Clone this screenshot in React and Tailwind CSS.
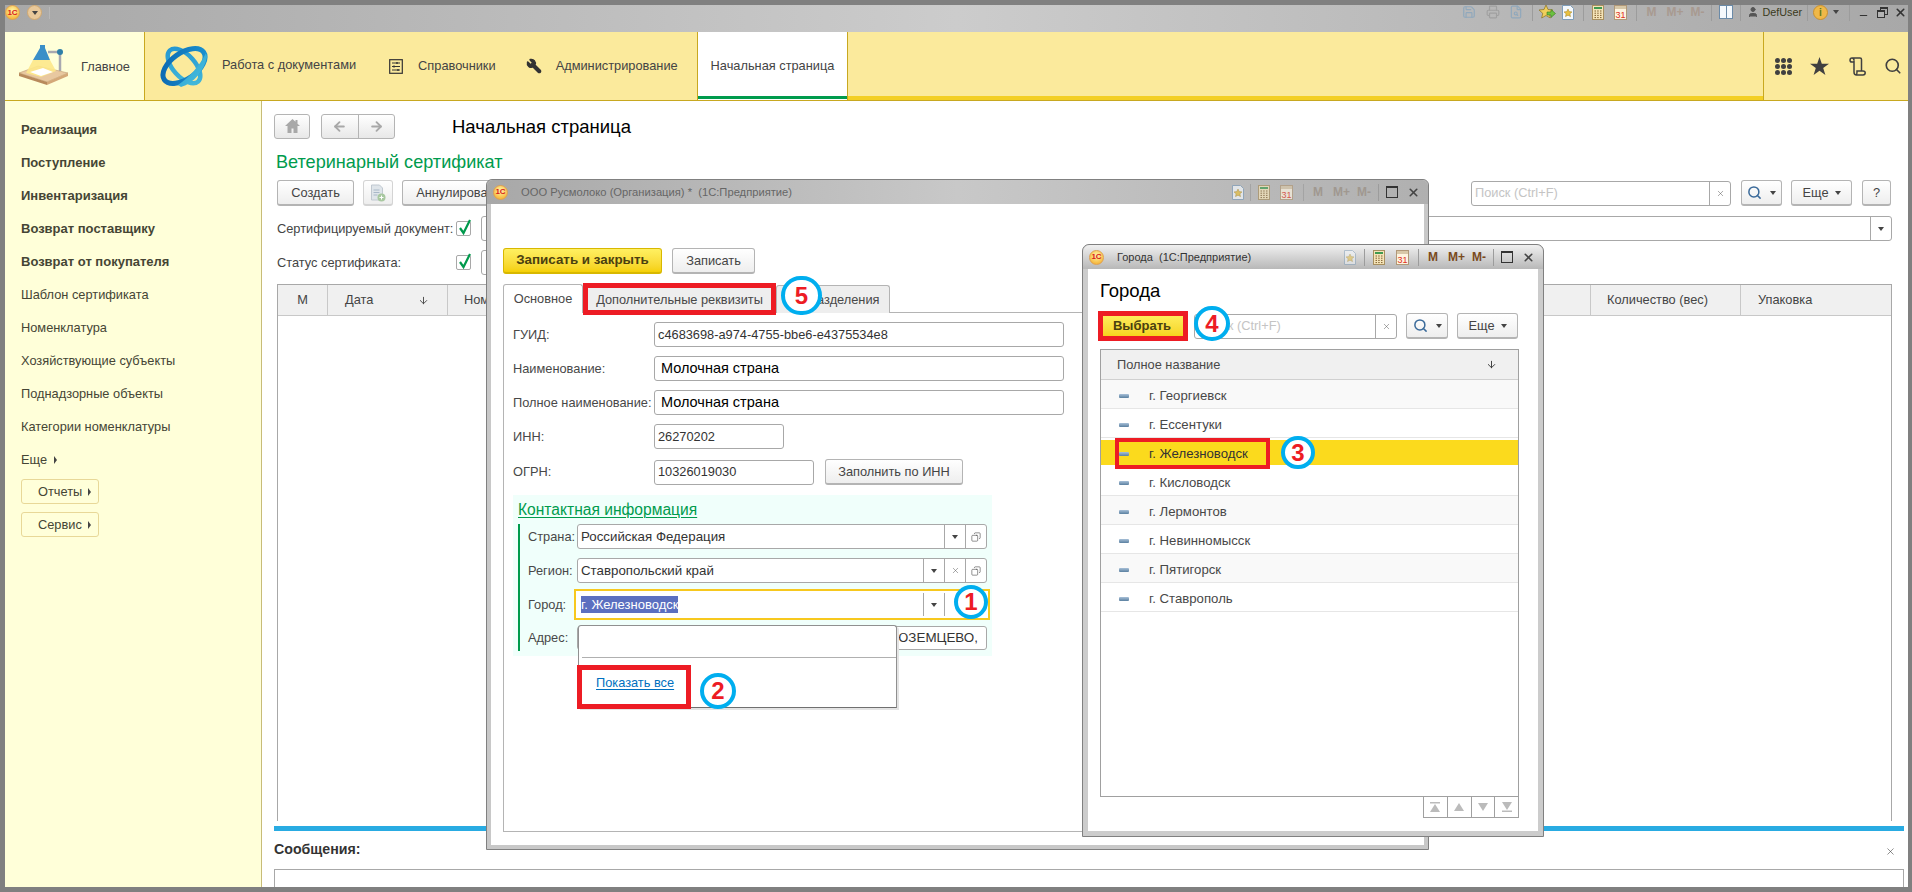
import { Search, Wrench, ArrowLeft, ArrowRight, Save, Printer, FileSearch, User, X, Minus, Copy, ArrowDown } from 'lucide-react'

const SIDE_BOLD = ['Реализация', 'Поступление', 'Инвентаризация', 'Возврат поставщику', 'Возврат от покупателя']
const SIDE_PLAIN = ['Шаблон сертификата', 'Номенклатура', 'Хозяйствующие субъекты', 'Поднадзорные объекты', 'Категории номенклатуры']
const CITIES = ['г. Георгиевск', 'г. Ессентуки', 'г. Железноводск', 'г. Кисловодск', 'г. Лермонтов', 'г. Невинномысск', 'г. Пятигорск', 'г. Ставрополь']
const PAGER = ['M1 0h10v1.500H1zM6 2l5 8H1z', 'M6 1l5 8H1z', 'M1 1h10L6 9z', 'M1 8.500h10V10H1zM6 8L1 0h10z']

function Logo1C() {
    return (
        <div className="w-[15px] h-[15px] shrink-0 rounded-full bg-[radial-gradient(circle_at_50%_35%,#fff6a8,#f4a51c)] border border-[#e0a050] flex items-center justify-center text-[8px] leading-none font-bold text-[#d8201c]">
            1С
        </div>
    )
}

function Caret({ className = '' }) {
    return <span className={`inline-block w-0 h-0 border-x-[3.5px] border-x-transparent border-t-[4px] border-t-[#444] ${className}`} />
}

function CaretRight() {
    return <span className="inline-block w-0 h-0 border-y-[4px] border-y-transparent border-l-[3.5px] border-l-[#444]" />
}

function PageStar() {
    return (
        <svg width="12" height="15" viewBox="0 0 12 15" className="shrink-0">
            <path d="M.5.5h8l3 3v11H.5z" fill="#f4f8fc" stroke="#7f9db9" />
            <path d="M6 4l1.200 2.600 2.800.3-2.100 1.900.6 2.800L6 10.200l-2.500 1.400.6-2.800L2 6.900l2.800-.3z" fill="#e8c040" stroke="#a08020" strokeWidth=".5" />
        </svg>
    )
}

function Calc() {
    return (
        <svg width="12" height="15" viewBox="0 0 12 15" className="shrink-0">
            <rect x=".5" y=".5" width="11" height="14" fill="#f5e4b8" stroke="#a89060" />
            <rect x="2" y="2" width="8" height="2" fill="#3f9a50" />
            <path d="M2.500 6h1.500M5.200 6h1.500M8 6h1.500M2.500 8.200h1.500M5.200 8.200h1.500M8 8.200h1.500M2.500 10.400h1.500M5.200 10.400h1.500M8 10.400h1.500M2.500 12.600h1.500M5.200 12.600h1.500M8 12.600h1.500" stroke="#806030" />
        </svg>
    )
}

function Cal31() {
    return (
        <svg width="13" height="15" viewBox="0 0 13 15" className="shrink-0">
            <rect x=".5" y=".5" width="12" height="14" fill="#fdf4e0" stroke="#b09878" />
            <rect x="1" y="1" width="11" height="3" fill="#d8c8a8" />
            <text x="6.500" y="12.800" textAnchor="middle" fontSize="9" fill="#e0301c" fontFamily="Liberation Sans">31</text>
        </svg>
    )
}

function FavArrow() {
    return (
        <svg width="17" height="16" viewBox="0 0 17 16" className="shrink-0">
            <path d="M7 1l2 4.500 5 .5-3.700 3.300 1 4.700L7 11.500 2.700 14l1-4.700L0 6l5-.5z" fill="#f0cf5a" stroke="#8a7020" strokeWidth=".7" />
            <path d="M8 8h4V5.500l4.500 4-4.500 4V11H8z" fill="#6cc040" stroke="#3a7a20" strokeWidth=".6" />
        </svg>
    )
}

function MemKeys({ className }) {
    return (
        <div className={`flex items-center gap-[7px] text-[12px] font-bold leading-none ${className}`}>
            <span className="w-[16px] text-center">M</span>
            <span className="w-[16px] text-center">M+</span>
            <span className="w-[16px] text-center">M-</span>
        </div>
    )
}

function Sep() {
    return <div className="w-px h-[17px] bg-[#9c9c9c] shrink-0" />
}

function Btn({ children, className = '' }) {
    return (
        <div className={`h-[26px] shrink-0 flex items-center justify-center rounded-[3px] border border-[#b4b4b4] border-b-[2px] bg-linear-to-b from-white to-[#eeeeee] text-[#444] whitespace-nowrap ${className}`}>
            {children}
        </div>
    )
}

function Field({ children, className = '', cells = null }) {
    return (
        <div className={`h-[25px] shrink-0 flex items-center rounded-[3px] border border-[#a8a8a8] bg-white ${className}`}>
            <div className="flex-1 min-w-0 px-[3px] whitespace-nowrap text-[#333]">{children}</div>
            {cells}
        </div>
    )
}

function Cell({ children, className = 'w-[21px]' }) {
    return <div className={`h-full shrink-0 flex items-center justify-center border-l border-[#a8a8a8] ${className}`}>{children}</div>
}

function OpenIcon() {
    return <Copy size={10} strokeWidth={1.400} className="text-[#444] -scale-x-100" />
}

function ClearX() {
    return <X size={9} strokeWidth={1.300} className="text-[#555]" />
}

function SearchBox({ className }) {
    return (
        <div className={`h-[25px] shrink-0 flex items-center rounded-[3px] border border-[#a8a8a8] bg-white ${className}`}>
            <div className="flex-1 pl-[3px] text-[#c4c4c4] whitespace-nowrap">Поиск (Ctrl+F)</div>
            <Cell className="w-[21px]"><ClearX /></Cell>
        </div>
    )
}

function SearchBtn({ className }) {
    return (
        <Btn className={`gap-[8px] ${className}`}>
            <Search size={15} strokeWidth={2.400} className="text-[#3a6a9a]" />
            <Caret />
        </Btn>
    )
}

function Ring({ n, className }) {
    return (
        <div className={`absolute rounded-full border-[4px] border-[#00aeef] bg-white flex items-center justify-center text-[#ed1c24] font-bold text-[24px] leading-none ${className}`}>
            {n}
        </div>
    )
}

function TitleBar() {
    return (
        <div className="h-[27px] shrink-0 flex items-start bg-linear-to-r from-[#a8a8a8] via-[#cccccc] to-[#a8a8a8] overflow-hidden">
            <div className="mt-0 flex items-center gap-[7px]">
                <Logo1C />
                <div className="w-[15px] h-[15px] rounded-full bg-[#e8c89a] border border-[#d0a870] flex items-center justify-center"><Caret /></div>
                <div className="w-px h-[12px] bg-[#b8b8b8]" />
            </div>
            <div className="ml-auto relative -top-[3px] flex items-center h-[20px] text-[#444]">
                <Save size={14} className="text-[#90a8bc] mr-[10px]" />
                <Printer size={14} className="text-[#a0a0a0] mr-[9px]" />
                <FileSearch size={14} className="text-[#90a8bc] mr-[9px]" />
                <Sep />
                <div className="w-[6px]" />
                <FavArrow />
                <div className="w-[6px]" />
                <PageStar />
                <div className="w-[9px]" />
                <Sep />
                <div className="w-[8px]" />
                <Calc />
                <div className="w-[10px]" />
                <Cal31 />
                <div className="w-[9px]" />
                <Sep />
                <MemKeys className="text-[#a89a90] mx-[6px]" />
                <Sep />
                <div className="mx-[7px] w-[14px] h-[14px] border border-[#6a8aa8] bg-[#f4f8fc] flex justify-center"><div className="w-px h-full bg-[#6a8aa8]" /></div>
                <Sep />
                <User size={12} fill="#555" className="text-[#555] ml-[6px] mr-[3px]" />
                <span className="text-[10.800px] text-[#3a3a20]">DefUser</span>
                <div className="w-[5px]" />
                <Sep />
                <div className="mx-[5px] w-[15px] h-[15px] rounded-full bg-[#f0b848] border border-[#c89030] flex items-center justify-center text-[10px] font-bold text-[#5a7a20]">i</div>
                <Caret />
                <div className="w-[10px]" />
                <Sep />
                <Minus size={11} strokeWidth={2.500} className="mx-[8px] mt-[6px] text-[#333]" />
                <div className="mr-[6px] relative w-[11px] h-[11px]">
                    <div className="absolute right-0 top-0 w-[8px] h-[8px] border border-[#333] border-t-[2px]" />
                    <div className="absolute left-0 bottom-0 w-[8px] h-[8px] border border-[#333] border-t-[2px] bg-[#b4b4b4]" />
                </div>
                <X size={13} strokeWidth={3} className="text-[#333] mr-[1px]" />
            </div>
        </div>
    )
}

function LampLogo() {
    return (
        <svg width="50" height="42" viewBox="0 0 50 42" className="shrink-0">
            <path d="M41 7v19" stroke="#a8a8b0" strokeWidth="2.500" />
            <path d="M0 28L19 21l30 7-21 9z" fill="#e8c8a0" stroke="#c09a70" strokeWidth=".6" />
            <path d="M0 28v3l28 9v-3z" fill="#b88a5c" />
            <path d="M28 37v3l21-9v-3z" fill="#d4a878" />
            <path d="M14 15h17l6 11-15 6-15-4z" fill="#fde88a" opacity=".9" />
            <path d="M11 27l13-4 10 4-12 4z" fill="#fff" />
            <path d="M29 7h12" stroke="#a8a8b0" strokeWidth="2.500" />
            <circle cx="41" cy="7" r="3" fill="#2f7fa8" />
            <path d="M21 0h5v3l5 12H14l7-12z" fill="#3a8fc8" />
        </svg>
    )
}

function OrbitLogo() {
    return (
        <svg width="48" height="42" viewBox="0 0 48 42" className="shrink-0">
            <defs>
                <linearGradient id="orbA" gradientUnits="userSpaceOnUse" x1="0" y1="0" x2="48" y2="42">
                    <stop offset="0" stopColor="#0a62ad" />
                    <stop offset="1" stopColor="#1c9ad6" />
                </linearGradient>
                <linearGradient id="orbB" gradientUnits="userSpaceOnUse" x1="0" y1="0" x2="48" y2="42">
                    <stop offset="0" stopColor="#1a8ccf" />
                    <stop offset="1" stopColor="#4cc3dc" />
                </linearGradient>
            </defs>
            <ellipse cx="24" cy="21" rx="21" ry="11" transform="rotate(48 24 21)" fill="none" stroke="url(#orbB)" strokeWidth="4.500" />
            <ellipse cx="24" cy="21" rx="24" ry="13" transform="rotate(-35 24 21)" fill="none" stroke="url(#orbA)" strokeWidth="5" />
            <path d="M46 8C40 20 30 32 18 40l3 2c13-4 23-16 26-30z" fill="url(#orbB)" />
        </svg>
    )
}

function RefIcon() {
    return (
        <svg width="14" height="15" viewBox="0 0 14 15" className="shrink-0">
            <rect x=".7" y=".7" width="12.600" height="13.600" fill="none" stroke="#333" strokeWidth="1.200" />
            <path d="M3 4h8M3 7.500h8M3 11h8" stroke="#333" />
            <path d="M8 3v2M5 6.500v2M9 10v2" stroke="#333" strokeWidth="1.400" />
        </svg>
    )
}

function GridIcon() {
    return (
        <svg width="17" height="17" viewBox="0 0 17 17" fill="#404040" className="shrink-0">
            {[2.500, 8.500, 14.500].flatMap((y) => [2.500, 8.500, 14.500].map((x) => <circle key={`${x}-${y}`} cx={x} cy={y} r="2.500" />))}
        </svg>
    )
}

function SharpStar() {
    return (
        <svg width="19" height="18" viewBox="0 0 19 18" fill="#404040" className="shrink-0 ml-[18px]">
            <path d="M9.500 0l2.300 6.800H19l-5.800 4.300 2.200 6.900-5.900-4.200L3.600 18l2.200-6.900L0 6.800h7.200z" />
        </svg>
    )
}

function ScrollIcon() {
    return (
        <svg width="17" height="19" viewBox="0 0 17 19" fill="none" stroke="#404040" strokeWidth="1.500" className="shrink-0 ml-[20px]">
            <path d="M5 3.500C5 2 4 1 3 1S1 2 1 3.200 2 5 3 5h2M3 1h8c1 0 1.500.7 1.500 1.500V14" />
            <path d="M5 3.500V15c0 1.500 1 3 2.500 3H14c1.400 0 2.200-1 2.200-2.200S15.400 14 14 14H8c0 1 0 4-1 4" />
        </svg>
    )
}

function Header() {
    return (
        <div className="h-[69px] shrink-0 flex border-b border-[#c8a820] bg-[#fbea9c] text-[12.800px] text-[#444]">
            <div className="w-[140px] shrink-0 flex items-center pl-[14px] gap-[12px] bg-[#ffffd9] border-r border-[#c8a820]">
                <LampLogo />
                <span className="relative top-[1px]">Главное</span>
            </div>
            <div className="w-[552px] shrink-0 flex items-center pl-[15px]">
                <OrbitLogo />
                <span className="ml-[14px] -mt-[2px]">Работа с документами</span>
                <div className="ml-[33px]"><RefIcon /></div>
                <span className="ml-[15px]">Справочники</span>
                <Wrench size={16} fill="#333" className="ml-[30px] text-[#333] -scale-x-100" />
                <span className="ml-[14px]">Администрирование</span>
            </div>
            <div className="w-[151px] shrink-0 flex items-center justify-center bg-white border-x border-[#c8a820] relative">
                <span>Начальная страница</span>
                <div className="absolute left-0 right-0 bottom-[1px] h-[3px] bg-[#009b4d]" />
            </div>
            <div className="flex-1 border-b-[4px] border-[#f3cf24]" />
            <div className="w-[145px] shrink-0 flex items-center bg-[#fbea9c] border-l border-[#c8a820] pl-[11px]">
                <GridIcon />
                <SharpStar />
                <ScrollIcon />
                <Search size={18} strokeWidth={2.200} className="ml-[18px] text-[#404040]" />
            </div>
        </div>
    )
}

function Sidebar() {
    return (
        <div className="w-[257px] shrink-0 bg-[#ffffd9] border-r border-[#c8bc78] pt-[12px] pl-[16px] text-[12.800px] text-[#454535]">
            {SIDE_BOLD.map((t) => (
                <div key={t} className="h-[33px] flex items-center font-bold text-[13px]">{t}</div>
            ))}
            {SIDE_PLAIN.map((t) => (
                <div key={t} className="h-[33px] flex items-center">{t}</div>
            ))}
            <div className="h-[33px] flex items-center gap-[7px]">Еще <CaretRight /></div>
            <div className="mt-[3px] w-[78px] h-[25px] flex items-center pl-[16px] gap-[6px] rounded-[3px] border border-[#e8d898]">Отчеты <CaretRight /></div>
            <div className="mt-[8px] w-[78px] h-[25px] flex items-center pl-[16px] gap-[6px] rounded-[3px] border border-[#e8d898]">Сервис <CaretRight /></div>
        </div>
    )
}

function Check() {
    return (
        <div className="w-[15px] h-[15px] shrink-0 border border-[#a8a8a8] rounded-[2px] bg-white relative">
            <svg width="15" height="18" viewBox="0 0 15 18" className="absolute left-0 -top-[4px]">
                <path d="M3 10l3.500 5L13 2" fill="none" stroke="#00994c" strokeWidth="2.200" />
            </svg>
        </div>
    )
}

function Main() {
    return (
        <div className="flex-1 min-w-0 flex flex-col bg-white pl-[12px] pr-[4px] text-[12.800px] text-[#444]">
            <div className="mt-[12px] h-[26px] shrink-0 flex items-center">
                <div className="w-[36px] h-[25px] flex items-center justify-center rounded-[3px] border border-[#b4b4b4] bg-linear-to-b from-white to-[#e8e8e8]">
                    <svg width="15" height="14" viewBox="0 0 15 14" fill="#a8a8a8"><path d="M7.500 0L0 7h2.500v7h4V9.500h2V14h4V7H15l-2.500-2.300V1h-2v1.800z" /></svg>
                </div>
                <div className="ml-[11px] w-[74px] h-[25px] flex rounded-[3px] border border-[#b4b4b4] bg-linear-to-b from-white to-[#e8e8e8]">
                    <div className="flex-1 flex items-center justify-center border-r border-[#b4b4b4]"><ArrowLeft size={15} strokeWidth={3} className="text-[#a8a8a8]" /></div>
                    <div className="flex-1 flex items-center justify-center"><ArrowRight size={15} strokeWidth={3} className="text-[#a8a8a8]" /></div>
                </div>
                <div className="ml-[57px] mt-[2px] text-[18.500px] text-black leading-none">Начальная страница</div>
            </div>
            <div className="mt-[12px] h-[24px] shrink-0 flex items-center text-[18.100px] text-[#009b4d] pl-[2px]">Ветеринарный сертификат</div>
            <div className="mt-[5px] h-[26px] shrink-0 flex items-center pl-[3px]">
                <Btn className="w-[77px]">Создать</Btn>
                <Btn className="ml-[9px] w-[30px] border-[#d4d4d4]">
                    <svg width="16" height="18" viewBox="0 0 16 18"><path d="M1.500 1h8l3 3v12h-11z" fill="#dfe5ea" stroke="#c0c8d0" /><path d="M3.500 6h6M3.500 8.500h6M3.500 11h4" stroke="#a8b8c8" /><circle cx="11.500" cy="13.500" r="4" fill="#a8c8a0" /><path d="M9.500 13.500h4M11.500 11.500v4" stroke="#fff" /></svg>
                </Btn>
                <Btn className="ml-[9px] w-[112px]">Аннулировать</Btn>
                <SearchBox className="ml-auto w-[260px]" />
                <SearchBtn className="ml-[10px] w-[41px]" />
                <Btn className="ml-[9px] w-[61px] gap-[6px]">Еще <Caret /></Btn>
                <Btn className="ml-[10px] mr-[13px] w-[29px]">?</Btn>
            </div>
            <div className="mt-[10px] h-[25px] shrink-0 flex items-center pl-[3px] mr-[12px]">
                <div className="w-[179px] whitespace-nowrap">Сертифицируемый документ:</div>
                <Check />
                <Field className="ml-[10px] flex-1" cells={<Cell><Caret /></Cell>} />
            </div>
            <div className="mt-[9px] h-[25px] shrink-0 flex items-center pl-[3px]">
                <div className="w-[179px]">Статус сертификата:</div>
                <Check />
                <Field className="ml-[10px] w-[100px]" />
            </div>
            <div className="mt-[9px] mb-[5px] ml-[3px] mr-[12px] flex-1 border border-b-0 border-[#a8a8a8]">
                <div className="h-[31px] flex bg-[#f0f0f0] border-b border-[#c8c8c8]">
                    <div className="w-[50px] flex items-center justify-center border-r border-[#c8c8c8]">М</div>
                    <div className="w-[120px] flex items-center pl-[17px] border-r border-[#c8c8c8]">
                        Дата
                        <ArrowDown size={11} className="ml-[45px]" />
                    </div>
                    <div className="flex-1 flex items-center pl-[16px]">Номер</div>
                    <div className="w-[150px] flex items-center pl-[16px] border-l border-[#c8c8c8]">Количество (вес)</div>
                    <div className="w-[151px] flex items-center pl-[17px] border-l border-[#c8c8c8]">Упаковка</div>
                </div>
            </div>
            <div className="h-[5px] shrink-0 bg-[#29abe2]" />
            <div className="h-[38px] shrink-0 flex items-center justify-between pr-[8px]">
                <span className="font-bold text-[14.200px] text-[#333]">Сообщения:</span>
                <X size={11} strokeWidth={1.300} className="text-[#444] mt-[2px]" />
            </div>
            <div className="h-[18px] shrink-0 border border-b-0 border-[#a8a8a8] bg-white" />
        </div>
    )
}

function ContactPanel() {
    return (
        <div className="mt-[10px] w-[479px] h-[161px] bg-[#f0fffb]">
            <div className="h-[29px] pl-[5px] flex items-center">
                <span className="text-[15.600px] text-[#009b4d] underline underline-offset-2 decoration-1">Контактная информация</span>
            </div>
            <div className="ml-[5px] h-[127px] border-l-[2px] border-[#009b4d] pl-[8px]">
                <div className="flex items-center">
                    <div className="w-[49px]">Страна:</div>
                    <Field className="w-[410px] text-[13.300px]" cells={<><Cell><Caret /></Cell><Cell><OpenIcon /></Cell></>}>Российская Федерация</Field>
                </div>
                <div className="mt-[9px] flex items-center">
                    <div className="w-[49px]">Регион:</div>
                    <Field className="w-[410px] text-[13.300px]" cells={<><Cell><Caret /></Cell><Cell><ClearX /></Cell><Cell><OpenIcon /></Cell></>}>Ставропольский край</Field>
                </div>
                <div className="mt-[6px] flex items-center">
                    <div className="w-[46px]">Город:</div>
                    <div className="w-[416px] h-[31px] flex items-center border-[2px] border-[#f7c81e] bg-white pl-[5px]">
                        <span className="bg-[#5b6fc0] text-white text-[13px] h-[17px] leading-[17px] whitespace-nowrap">г. Железноводск</span>
                        <div className="ml-auto h-[23px] w-[22px] flex items-center justify-center border-x border-[#a8a8a8] mr-[43px]"><Caret /></div>
                    </div>
                </div>
                <div className="mt-[6px] flex items-center">
                    <div className="w-[49px]">Адрес:</div>
                    <div className="w-[410px] h-[24px] flex items-center justify-end pr-[8px] rounded-[3px] border border-[#a8a8a8] bg-white text-[13.400px] text-[#333]">ЮЗЕМЦЕВО,</div>
                </div>
            </div>
        </div>
    )
}

function FormRow({ label, children, className = 'mt-[9px]' }) {
    return (
        <div className={`flex items-center ${className}`}>
            <div className="w-[141px] shrink-0 whitespace-nowrap">{label}</div>
            {children}
        </div>
    )
}

function OrgWindow() {
    return (
        <div className="absolute left-[486px] top-[179px] w-[943px] h-[671px] flex flex-col rounded-t-[6px] border border-[#808080] bg-[#c8c8c8] px-[4px] pb-[4px] text-[12.800px] text-[#484848]">
            <div className="h-[24px] shrink-0 flex items-center -mx-[4px] rounded-t-[6px] bg-linear-to-r from-[#a8a8a8] via-[#c8c8c8] to-[#b0b0b0] pl-[6px]">
                <Logo1C />
                <span className="ml-[13px] text-[11.200px] text-[#666] whitespace-pre">ООО Русмолоко (Организация) *  (1С:Предприятие)</span>
                <div className="ml-auto flex items-center opacity-70">
                    <PageStar />
                    <div className="w-[6px]" />
                    <Sep />
                    <div className="w-[7px]" />
                    <Calc />
                    <div className="w-[10px]" />
                    <Cal31 />
                    <div className="w-[10px]" />
                    <Sep />
                </div>
                <MemKeys className="text-[#a09890] mx-[6px]" />
                <Sep />
                <div className="ml-[7px] w-[12px] h-[12px] border border-[#333] border-t-[2px]" />
                <X size={13} strokeWidth={3} className="text-[#444] ml-[9px] mr-[8px]" />
            </div>
            <div className="flex-1 bg-white pl-[12px] pt-[44px]">
                <div className="flex items-center">
                    <div className="w-[159px] h-[26px] flex items-center justify-center rounded-[3px] border border-[#d8b800] border-b-[2px] bg-linear-to-b from-[#fff060] to-[#f5d000] font-bold text-[13.400px] text-[#4a4010]">Записать и закрыть</div>
                    <Btn className="ml-[10px] w-[83px]">Записать</Btn>
                </div>
                <div className="mt-[10px] h-[29px] flex items-end">
                    <div className="w-[80px] h-[29px] flex items-center justify-center rounded-t-[3px] border border-b-0 border-[#b4b4b4] bg-white">Основное</div>
                    <div className="w-[193px] h-[28px] flex items-center justify-center rounded-t-[3px] border border-b-0 border-[#b4b4b4] bg-[#eeeeee]">Дополнительные реквизиты</div>
                    <div className="w-[114px] h-[28px] flex items-center justify-center rounded-t-[3px] border border-b-0 border-[#b4b4b4] bg-[#eeeeee]">Подразделения</div>
                </div>
                <div className="w-[910px] h-[520px] -mt-px border border-[#b4b4b4] pl-[9px] pt-[9px]">
                    <FormRow label="ГУИД:" className="">
                        <Field className="w-[410px]">c4683698-a974-4755-bbe6-e4375534e8</Field>
                    </FormRow>
                    <FormRow label="Наименование:">
                        <Field className="w-[410px]"><span className="pl-[3px] text-[14.500px] text-black">Молочная страна</span></Field>
                    </FormRow>
                    <FormRow label="Полное наименование:">
                        <Field className="w-[410px]"><span className="pl-[3px] text-[14.500px] text-black">Молочная страна</span></Field>
                    </FormRow>
                    <FormRow label="ИНН:">
                        <Field className="w-[130px]">26270202</Field>
                    </FormRow>
                    <FormRow label="ОГРН:" className="mt-[10px]">
                        <Field className="w-[160px]">10326019030</Field>
                        <Btn className="ml-[11px] w-[138px]">Заполнить по ИНН</Btn>
                    </FormRow>
                    <ContactPanel />
                </div>
            </div>
        </div>
    )
}

function CityPopup() {
    return (
        <div className="absolute left-[578px] top-[625px] w-[319px] h-[83px] rounded-t-[3px] border border-[#909090] border-b-[#707070] bg-white shadow-[2px_2px_0_#e4e4e4] pl-[3px]">
            <div className="mt-[31px] h-px bg-[#b0b0b0]" />
            <div className="mt-[19px] ml-[14px] text-[12.800px] text-[#0070c0] underline underline-offset-2 leading-none">Показать все</div>
        </div>
    )
}

function CitiesWindow() {
    return (
        <div className="absolute left-[1082px] top-[244px] w-[462px] h-[593px] flex flex-col rounded-t-[7px] border border-[#808080] bg-[#cccccc] px-[5px] pb-[5px] text-[12.800px] text-[#484848]">
            <div className="h-[24px] shrink-0 flex items-center -mx-[5px] rounded-t-[7px] bg-linear-to-b from-[#f0f0f0] to-[#b8b8b8] pl-[6px]">
                <Logo1C />
                <span className="ml-[13px] text-[#333] text-[11px] whitespace-pre">Города  (1С:Предприятие)</span>
                <div className="ml-auto opacity-50"><PageStar /></div>
                <div className="w-[8px]" />
                <Sep />
                <div className="w-[8px]" />
                <Calc />
                <div className="w-[11px]" />
                <Cal31 />
                <div className="w-[9px]" />
                <Sep />
                <MemKeys className="text-[#7a4a20] mx-[6px]" />
                <Sep />
                <div className="ml-[7px] w-[12px] h-[12px] border border-[#333] border-t-[2px]" />
                <X size={13} strokeWidth={3} className="text-[#444] ml-[9px] mr-[8px]" />
            </div>
            <div className="flex-1 bg-white pl-[12px] pr-[19px] flex flex-col">
                <div className="mt-[10px] h-[24px] flex items-center text-[18.500px] text-black">Города</div>
                <div className="mt-[10px] flex items-center">
                    <div className="w-[84px] h-[26px] flex items-center justify-center rounded-[3px] bg-linear-to-b from-[#fff060] to-[#f5d000] font-bold text-[13px] text-[#4a4010]">Выбрать</div>
                    <SearchBox className="ml-[10px] w-[203px]" />
                    <SearchBtn className="ml-[9px] w-[42px]" />
                    <Btn className="ml-[9px] w-[61px] gap-[6px]">Еще <Caret /></Btn>
                </div>
                <div className="mt-[10px] h-[448px] border border-[#a0a0a0] flex flex-col">
                    <div className="h-[30px] shrink-0 flex items-center justify-between bg-[#f0f0f0] border-b border-[#d0d0d0] pl-[16px] pr-[21px]">
                        Полное название
                        <ArrowDown size={11} className="text-[#333]" />
                    </div>
                    {CITIES.map((c, i) => (
                        <div key={c} className={`h-[29px] shrink-0 flex items-center pt-[3px] pl-[18px] text-[13.200px] text-[#484848] ${i === 2 ? 'bg-[#fbda1d] border-y-[2px] border-white' : i === 0 || i === 4 || i === 6 ? 'bg-[#f9f9f9] border-b border-[#e6e6e6]' : 'bg-white border-b border-[#e6e6e6]'}`}>
                            <div className="w-[10px] h-[4px] rounded-[1px] bg-linear-to-b from-[#a8c0d8] to-[#5a80a0] mr-[20px]" />
                            <span className={i === 2 ? 'text-[#333]' : ''}>{c}</span>
                        </div>
                    ))}
                </div>
                <div className="self-end -mt-px w-[96px] h-[22px] flex border border-[#a0a0a0] border-t-0 border-r-0">
                    {PAGER.map((d) => (
                        <div key={d} className="flex-1 flex items-center justify-center border-r border-[#a0a0a0]">
                            <svg width="12" height="10" viewBox="0 0 12 10" fill="#bbb"><path d={d} /></svg>
                        </div>
                    ))}
                </div>
            </div>
        </div>
    )
}

export default function App() {
    return (
        <div className="relative w-[1912px] h-[892px] overflow-hidden flex flex-col bg-[#808080] pt-[5px] pl-[5px] pr-[4px] pb-[5px] font-['Liberation_Sans',Arial,sans-serif]">
            <TitleBar />
            <Header />
            <div className="flex-1 min-h-0 flex">
                <Sidebar />
                <Main />
            </div>

            <OrgWindow />
            <CityPopup />
            <CitiesWindow />

            {/* annotations */}
            <div className="absolute left-[583px] top-[283px] w-[193px] h-[32px] border-[5px] border-[#ed1c24]" />
            <Ring n="5" className="left-[781px] top-[276px] w-[41px] h-[39px]" />
            <Ring n="1" className="left-[954px] top-[585px] w-[34px] h-[34px]" />
            <div className="absolute left-[577px] top-[665px] w-[114px] h-[44px] border-[5px] border-[#ed1c24]" />
            <Ring n="2" className="left-[700px] top-[673px] w-[36px] h-[36px]" />
            <div className="absolute left-[1115px] top-[438px] w-[155px] h-[31px] border-[4px] border-[#ed1c24]" />
            <Ring n="3" className="left-[1281px] top-[436px] w-[34px] h-[33px]" />
            <div className="absolute left-[1098px] top-[311px] w-[90px] h-[30px] border-[5px] border-[#ed1c24]" />
            <Ring n="4" className="left-[1194px] top-[306px] w-[36px] h-[35px]" />
        </div>
    )
}
